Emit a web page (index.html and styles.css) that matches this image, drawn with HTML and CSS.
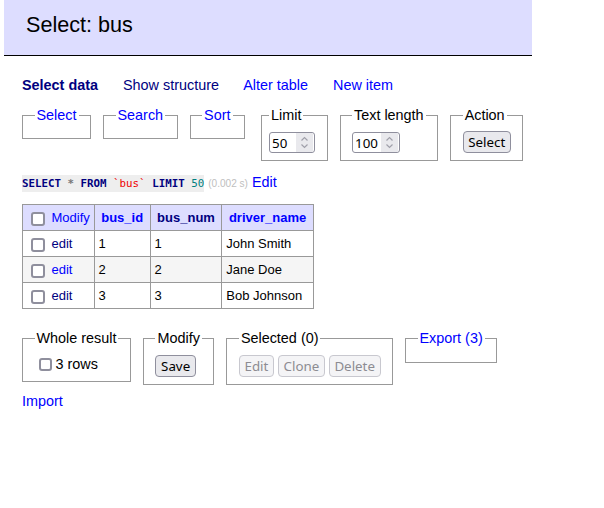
FILE: index.html
```html
<!DOCTYPE html>
<html lang="en">
<head>
<meta charset="utf-8">
<title>Select: bus</title>
<link rel="stylesheet" href="styles.css">
</head>
<body>
<h2 class="title">Select: bus</h2>
<div class="content">
  <p class="links"><a class="visited strong" href="#">Select data</a> <a class="visited" href="#">Show structure</a> <a href="#">Alter table</a> <a href="#">New item</a></p>

  <form class="controls">
    <fieldset class="fs"><legend><a href="#">Select</a></legend></fieldset>
    <fieldset class="fs"><legend><a href="#">Search</a></legend></fieldset>
    <fieldset class="fs"><legend><a href="#">Sort</a></legend></fieldset>
    <fieldset class="fs fs-limit"><legend>Limit</legend>
      <div class="row">
        <span class="numbox w46"><input class="num-in" type="text" value="50"><span class="spin"><svg width="17" height="19" viewBox="0 0 17 19"><path d="M5.5 7.5 L8.5 4.5 L11.5 7.5 M5.5 11.5 L8.5 14.5 L11.5 11.5" fill="none" stroke="#a0a0aa" stroke-width="1.2"/></svg></span></span>
      </div>
    </fieldset>
    <fieldset class="fs"><legend>Text length</legend>
      <div class="row">
        <span class="numbox w48"><input class="num-in" type="text" value="100"><span class="spin"><svg width="17" height="19" viewBox="0 0 17 19"><path d="M5.5 7.5 L8.5 4.5 L11.5 7.5 M5.5 11.5 L8.5 14.5 L11.5 11.5" fill="none" stroke="#a0a0aa" stroke-width="1.2"/></svg></span></span>
      </div>
    </fieldset>
    <fieldset class="fs"><legend>Action</legend>
      <div class="row"><button type="button" class="btn">Select</button></div>
    </fieldset>
  </form>

  <p class="query"><code class="sql"><span class="kw">SELECT</span> <span class="op">*</span> <span class="kw">FROM</span> <span class="bac">`bus`</span> <span class="kw">LIMIT</span> <span class="nm">50</span></code> <span class="time">(0.002 s)</span> <a href="#">Edit</a></p>

  <table class="grid">
    <thead>
      <tr>
        <td><input type="checkbox" class="cb cb-t"> <a href="#">Modify</a></td>
        <th><a href="#">bus_id</a></th>
        <th><a class="visited" href="#">bus_num</a></th>
        <th><a href="#">driver_name</a></th>
      </tr>
    </thead>
    <tbody>
      <tr>
        <td><input type="checkbox" class="cb cb-t"> <a class="visited" href="#">edit</a></td>
        <td>1</td><td>1</td><td>John Smith</td>
      </tr>
      <tr>
        <td><input type="checkbox" class="cb cb-t"> <a href="#">edit</a></td>
        <td>2</td><td>2</td><td>Jane Doe</td>
      </tr>
      <tr>
        <td><input type="checkbox" class="cb cb-t"> <a class="visited" href="#">edit</a></td>
        <td>3</td><td>3</td><td>Bob Johnson</td>
      </tr>
    </tbody>
  </table>

  <form class="controls bottom">
    <fieldset class="fs"><legend>Whole result</legend>
      <label class="check"><input type="checkbox" class="cb cb-label">3 rows</label>
    </fieldset>
    <fieldset class="fs"><legend>Modify</legend>
      <div class="row"><button type="button" class="btn">Save</button></div>
    </fieldset>
    <fieldset class="fs"><legend>Selected (0)</legend>
      <div class="row">
        <button type="button" class="btn" disabled>Edit</button>
        <button type="button" class="btn" disabled>Clone</button>
        <button type="button" class="btn" disabled>Delete</button>
      </div>
    </fieldset>
    <fieldset class="fs"><legend><a href="#">Export (3)</a></legend></fieldset>
  </form>

  <p class="import"><a href="#">Import</a></p>
</div>
</body>
</html>
```

FILE: styles.css
```css
body {
  margin: 0;
  font-family: "Liberation Sans", Arial, sans-serif;
  font-size: 14.4px;
  line-height: 18px;
  color: #000;
  background: #fff;
}

a {
  color: #00f;
  text-decoration: none;
}

a.visited {
  color: #000080;
}

a.strong {
  font-weight: bold;
}

.title {
  box-sizing: border-box;
  width: 528px;
  margin: 0 0 0 4px;
  padding: 11px 22px 17px;
  font-size: 21.6px;
  line-height: 27px;
  font-weight: normal;
  background: #ddf;
  border-bottom: 1px solid #000;
}

.content {
  padding-left: 22px;
}

.links {
  margin: 20px 0 0;
}

.links a {
  margin-right: 21px;
}

.controls {
  display: flex;
  align-items: flex-start;
  gap: 12px;
  margin: 12px 0 0;
}

.controls.bottom {
  margin-top: 20px;
}

.fs {
  margin: 0;
  padding: 7.2px 11.5px;
  border: 1px solid #999;
  min-width: 0;
}

.fs legend {
  padding: 0 2px;
}

.fs-limit {
  margin-left: 4px;
  padding-left: 7px;
}

.row {
  display: flex;
  gap: 4px;
}

.numbox {
  box-sizing: border-box;
  display: flex;
  height: 21px;
  margin-top: 1px;
  padding: 0 1px 0 0;
  border: 1px solid #8f8f9d;
  border-radius: 3px;
  background: #fff;
  overflow: hidden;
}

.w46 { width: 46px; }
.w48 { width: 48px; }

.num-in {
  flex: 1;
  min-width: 0;
  width: 10px;
  margin: 0;
  padding: 0 0 0 2px;
  border: 0;
  outline: none;
  background: transparent;
  font-family: "Noto Sans", "Open Sans", sans-serif;
  font-size: 13.33px;
  color: #000;
}

.spin {
  display: flex;
  align-items: center;
  width: 17px;
  margin: 0;
  background: #e9e9ed;
}

.spin svg {
  display: block;
}

.btn {
  box-sizing: border-box;
  height: 22px;
  margin: 0;
  padding: 0 4.6px;
  font-family: "Noto Sans", "Open Sans", sans-serif;
  font-size: 13.33px;
  line-height: 20px;
  color: #000;
  background: #e9e9ed;
  border: 1px solid #8f8f9d;
  border-radius: 4px;
}

.btn:disabled {
  color: #8c8c92;
  background: #f4f4f6;
  border-color: #c8c8cf;
}

.query {
  margin: 12px 0 0;
}

.sql {
  font-family: "DejaVu Sans Mono", "Liberation Mono", monospace;
  font-size: 10.8px;
  line-height: 12px;
  background: #eee;
  padding: 2px 0;
}

.kw {
  font-weight: bold;
  color: #000080;
}

.op {
  font-weight: bold;
  color: #777;
}

.bac {
  color: #e00;
}

.nm {
  color: #008080;
}

.time {
  color: silver;
  font-size: 10.08px;
  line-height: 12px;
}

.grid {
  border-collapse: collapse;
  margin: 13px 0 0;
  font-size: 13px;
  line-height: 19px;
}

.grid td,
.grid th {
  border: 1px solid #999;
  padding: 3px 3.9px;
  text-align: left;
  white-space: nowrap;
  vertical-align: middle;
}

.grid thead td,
.grid thead th {
  background: #ddf;
}

.grid thead th {
  padding: 3px 6.5px;
  font-weight: bold;
}

.grid tbody tr:nth-child(2n) {
  background: #f5f5f5;
}

.cb {
  appearance: none;
  -webkit-appearance: none;
  box-sizing: border-box;
  width: 13px;
  height: 13px;
  margin: 0 3px 0 4px;
  border: 2px solid #8f8f9d;
  border-radius: 3px;
  background: #fff;
  vertical-align: middle;
}

.cb-t {
  width: 14px;
  height: 14px;
}

.check {
  display: flex;
  align-items: center;
  height: 19px;
}

.cb-label {
  margin-right: 4px;
}

.import {
  margin: 7.6px 0 0;
}
```
